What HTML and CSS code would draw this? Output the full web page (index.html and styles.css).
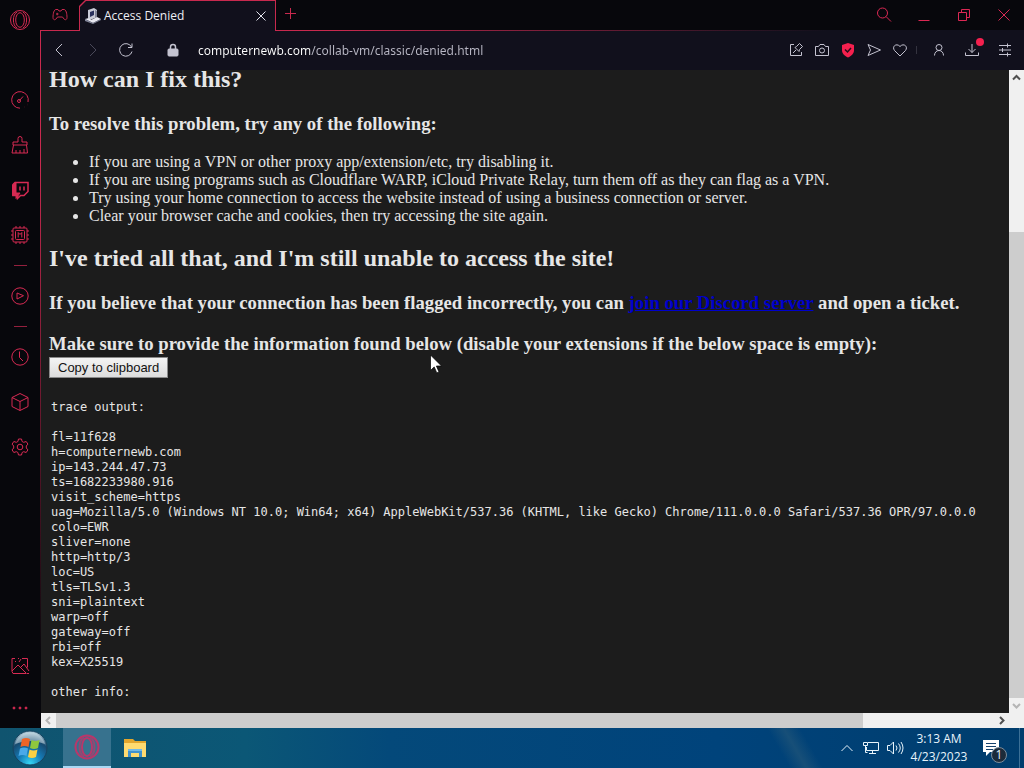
FILE: index.html
```html
<!DOCTYPE html>
<html lang="en">
<head>
<meta charset="utf-8">
<title>Access Denied</title>
<link rel="stylesheet" href="styles.css">
</head>
<body>
<div class="browser">
  <nav class="sidebar" aria-label="Sidebar">
    <button class="side-logo" aria-label="Opera menu"><svg width="22" height="22" viewBox="0 0 22 22"><circle cx="11" cy="11" r="9.5"/><ellipse cx="11" cy="11" rx="4.3" ry="7.3"/><path d="M8 3.2C3.2 5 3.200 17 8 18.800M14 3.200c4.800 1.800 4.800 13.800 0 15.600"/></svg></button>
    <div class="side-group">
      <button aria-label="GX Control"><svg width="20" height="20" viewBox="0 0 20 20"><path d="M10 18.200a8.300 8.300 0 1 1 8-6.200M9.500 10.500l3.500-4"/><circle cx="9" cy="11" r="1.500"/><path d="M17.500 14.500h.1M14.500 17h.1" stroke-width="1.800"/></svg></button>
      <button aria-label="GX Cleaner"><svg width="20" height="20" viewBox="0 0 20 20"><path d="M3 10V7h5V3.500a2 2 0 0 1 4 0V7h5v3zM3.500 10L2 18h15.500L16.500 10M6 18v-3M10 18v-3M14 18v-4"/></svg></button>
      <button aria-label="Twitch"><svg width="20" height="20" viewBox="0 0 20 20"><path class="solid" d="M2.500 5L6 2v11h4l-4 5.500v-3H2.500z"/><path d="M5 2.500h13v9l-4 4h-3.500l-3 3v-3H3V4.500zM10 6.500v4M14 6.500v4" stroke-width="1.500"/></svg></button>
      <button aria-label="Limiter"><svg width="20" height="20" viewBox="0 0 20 20"><rect x="3" y="3" width="14" height="14" rx="1"/><rect x="5.500" y="5.500" width="9" height="9" rx="1"/><path d="M8.200 12.500v-5l1.800 2 1.800-2v5M6 3V1M10 3V1M14 3V1M6 19v-2M10 19v-2M14 19v-2M1 6h2M1 10h2M1 14h2M17 6h2M17 10h2M17 14h2"/></svg></button>
    </div>
    <hr>
    <div class="side-group">
      <button aria-label="Player"><svg width="20" height="20" viewBox="0 0 20 20"><circle cx="10" cy="10" r="8.200"/><path d="M7 7l6.500 2.700L7 13z"/></svg></button>
    </div>
    <hr>
    <div class="side-group">
      <button aria-label="History"><svg width="20" height="20" viewBox="0 0 20 20"><circle cx="10" cy="10" r="8.200"/><path d="M9.500 4.500v6l3.500 3.500"/></svg></button>
      <button aria-label="Extensions"><svg width="20" height="20" viewBox="0 0 20 20"><path d="M10 1.500l8 4v9l-8 4-8-4v-9zM2 5.500l8 4 8-4M10 9.500v9"/></svg></button>
      <button aria-label="Settings"><svg width="20" height="20" viewBox="0 0 20 20"><circle cx="10" cy="10" r="2.800"/><path d="M8.500 2h3l.6 2.500 1.600.8 2.500-.8 1.700 2.600-1.600 1.900v2l1.600 1.900-1.700 2.600-2.500-.8-1.600.8-.6 2.500h-3l-.6-2.500-1.600-.8-2.500.8-1.700-2.600L3.700 11V9L2.100 7.100l1.700-2.600 2.500.8 1.600-.8z"/></svg></button>
    </div>
    <div class="side-bottom">
      <button aria-label="Wallpaper"><svg width="20" height="20" viewBox="0 0 20 20"><path d="M5 2.500H2v13l1 2h13M8 2.500h1M12 2.500h5.500v9M2 15l6-6 8.500 8.500M11 11l3-3 5 7M5 5.500h1M9 6l2-3M19 17.500h-2"/></svg></button>
      <button aria-label="More"><svg width="20" height="20" viewBox="0 0 20 20"><g class="solid"><circle cx="4" cy="10" r="1"/><circle cx="10" cy="10" r="1"/><circle cx="16" cy="10" r="1"/></g></svg></button>
    </div>
  </nav>

  <main class="window">
    <header class="tabbar">
      <button class="gx" aria-label="GX Corner"><svg width="16" height="14" viewBox="0 0 16 14"><path d="M4 1.500h2l1 1.500h2l1-1.500h2c2 0 3 4 3 8 0 2-1.500 3-3 1.500l-1.500-2h-5L4 11C2.500 12.500 1 11.500 1 9.500c0-4 1-8 3-8zM4 6h2.500M5.200 4.800v2.500M10.500 5h.1M12 7h.1"/></svg></button>
      <div class="tab">
        <svg class="favicon" width="16" height="16" viewBox="0 0 16 16"><path fill="#c9cad6" d="M3 2l6-2 3 2v7l-7 3-2-2z"/><path fill="#29305c" d="M5 4l4-1.500V7L5 9z"/><path fill="#83869a" d="M10 2l2 1v6l-2 1z"/><path fill="#e8e8f0" d="M0 11l4-1 2 2 6-3 4 2-8 4z"/><path fill="#83869a" d="M0 11v2l8 3 8-4v-1l-8 4z"/></svg>
        <span class="tab-title">Access Denied</span>
        <button class="tab-close" aria-label="Close tab"><svg width="12" height="12" viewBox="0 0 12 12"><path d="M1.500 1.500l9 9M10.500 1.500l-9 9"/></svg></button>
      </div>
      <button class="new-tab" aria-label="New tab"><svg width="12" height="12" viewBox="0 0 12 12"><path d="M5.500 0v11M0 5.500h11"/></svg></button>
      <div class="window-controls">
        <button aria-label="Search tabs"><svg width="16" height="16" viewBox="0 0 16 16"><circle cx="6.500" cy="6" r="5"/><path d="M10 9.500l5 5"/></svg></button>
        <button aria-label="Minimize"><svg width="16" height="16" viewBox="0 0 16 16"><path d="M2.500 13.500h11"/></svg></button>
        <button aria-label="Restore"><svg width="16" height="16" viewBox="0 0 16 16"><path d="M2.500 5.500h8v8h-8zM5.500 5.500v-3h8v8h-3"/></svg></button>
        <button aria-label="Close"><svg width="16" height="16" viewBox="0 0 16 16"><path d="M2.500 2.500l11 11M13.500 2.500l-11 11"/></svg></button>
      </div>
    </header>

    <section class="frame">
      <div class="toolbar">
        <div class="nav-buttons">
          <button aria-label="Back"><svg width="16" height="16" viewBox="0 0 16 16"><path d="M10 2L4 8l6 6"/></svg></button>
          <button class="dim" aria-label="Forward" disabled><svg width="16" height="16" viewBox="0 0 16 16"><path d="M5 2l6 6-6 6"/></svg></button>
          <button aria-label="Reload"><svg width="16" height="16" viewBox="0 0 16 16"><path d="M13.500 5A6.300 6.300 0 1 0 14 9.500M14 1.500V5.500h-4"/></svg></button>
        </div>
        <button class="lock" aria-label="Site information"><svg width="12" height="14" viewBox="0 0 12 14"><rect class="lock-body" x="1" y="6" width="10" height="7" rx="1"/><path d="M3.500 6V4a2.500 2.500 0 0 1 5 0v2" stroke-width="1.500"/></svg></button>
        <input class="address" type="text" aria-label="Address" value="computernewb.com/collab-vm/classic/denied.html">
        <div class="tools">
          <button aria-label="Easy setup"><svg width="16" height="16" viewBox="0 0 16 16"><path d="M6 2.500H2.500v11h11V10M5 11l3-3M7 5.500l4 4 .5-2 3-3-3-3-3 3z"/></svg></button>
          <button aria-label="Snapshot"><svg width="16" height="16" viewBox="0 0 16 16"><path d="M1.500 4.500h3l1.500-2h4l1.500 2h3v9h-13z"/><circle cx="8" cy="8.500" r="2.500"/></svg></button>
          <button aria-label="Ad blocker"><svg width="16" height="16" viewBox="0 0 16 16"><path class="shield" d="M8 1l6 2v5c0 4-3 6-6 7.500C5 14 2 12 2 8V3z"/><path class="tick" d="M5 7.500l2.500 2.500L11 6"/></svg></button>
          <button aria-label="Send to My Flow"><svg width="16" height="16" viewBox="0 0 16 16"><path d="M2 2.500L14.500 8 2 13.500 4.500 8z"/></svg></button>
          <button aria-label="Favourite"><svg width="16" height="16" viewBox="0 0 16 16"><path d="M8 14L2.500 8.500C-.5 4.500 4.500.5 8 4.500c3.500-4 8.500 0 5.500 4z"/></svg></button>
        </div>
        <div class="tools-right">
          <button aria-label="Profile"><svg width="16" height="16" viewBox="0 0 16 16"><circle cx="8" cy="5.500" r="3"/><path d="M3.500 13.500c0-3 2-5 4.500-5s4.500 2 4.500 5"/></svg></button>
          <button class="download" aria-label="Downloads"><svg width="16" height="16" viewBox="0 0 16 16"><path d="M8 2v8.500M4.500 7L8 10.500 11.500 7M1.500 10.500v3h13v-3"/></svg><span class="dot"></span></button>
          <button aria-label="Easy setup menu"><svg width="16" height="16" viewBox="0 0 16 16"><path d="M2 3.500h12M2 8h12M2 12.500h12M10.500 1.500v4M5.500 6v4M10.500 10.500v4"/></svg></button>
        </div>
      </div>

      <div class="viewport">
        <article class="page">
          <h2>How can I fix this?</h2>
          <h3>To resolve this problem, try any of the following:</h3>
          <ul>
            <li>If you are using a VPN or other proxy app/extension/etc, try disabling it.</li>
            <li>If you are using programs such as Cloudflare WARP, iCloud Private Relay, turn them off as they can flag as a VPN.</li>
            <li>Try using your home connection to access the website instead of using a business connection or server.</li>
            <li>Clear your browser cache and cookies, then try accessing the site again.</li>
          </ul>
          <h2>I've tried all that, and I'm still unable to access the site!</h2>
          <h3>If you believe that your connection has been flagged incorrectly, you can <a href="#discord">join our Discord server</a> and open a ticket.</h3>
          <h3 class="info">Make sure to provide the information found below (disable your extensions if the below space is empty):</h3>
          <button class="copy">Copy to clipboard</button>
<pre>trace output:

fl=11f628
h=computernewb.com
ip=143.244.47.73
ts=1682233980.916
visit_scheme=https
uag=Mozilla/5.0 (Windows NT 10.0; Win64; x64) AppleWebKit/537.36 (KHTML, like Gecko) Chrome/111.0.0.0 Safari/537.36 OPR/97.0.0.0
colo=EWR
sliver=none
http=http/3
loc=US
tls=TLSv1.3
sni=plaintext
warp=off
gateway=off
rbi=off
kex=X25519

other info:</pre>
        </article>
        <div class="vscroll">
          <svg width="15" height="15" viewBox="0 0 15 15"><path d="M4 9.500L7.500 6 11 9.500"/></svg>
          <div class="vtrack"><div class="vthumb"></div></div>
          <svg class="faded" width="15" height="15" viewBox="0 0 15 15"><path d="M4 6l3.500 3.500L11 6"/></svg>
        </div>
        <div class="hscroll">
          <svg class="faded" width="15" height="15" viewBox="0 0 15 15"><path d="M9 4L5.500 7.500 9 11"/></svg>
          <div class="htrack"><div class="hthumb"></div></div>
          <svg width="15" height="15" viewBox="0 0 15 15"><path d="M6 4l3.500 3.500L6 11"/></svg>
        </div>
      </div>
    </section>
  </main>
</div>

<footer class="taskbar">
  <button class="start" aria-label="Start"><svg width="36" height="36" viewBox="0 0 36 36">
    <defs><radialGradient id="orb" cx=".5" cy=".95" r=".9"><stop offset="0" stop-color="#35d6f5"/><stop offset=".4" stop-color="#1579b4"/><stop offset=".75" stop-color="#174b70"/><stop offset="1" stop-color="#a9c6d4"/></radialGradient></defs>
    <circle cx="18" cy="18" r="17" fill="url(#orb)" stroke="#17435f"/><path d="M3 14a15.500 15.500 0 0 1 30 0q-15-6-30 0z" fill="#d5e4ea" opacity=".5"/>
    <path d="M10 9q4-2 8 0l-1.500 8q-4-2-8 0z" fill="#ee6428"/><path d="M19.500 10q4 2 8 0L26 18q-4 2-8 0z" fill="#8fc73e"/><path d="M8 18.500q4-2 8 0L14.500 26q-4-2-8 0z" fill="#4aa9e8"/><path d="M17.500 19.500q4 2 8 0L24 27q-4 2-8 0z" fill="#fbd043"/></svg></button>
  <button class="task active" aria-label="Opera GX"><svg width="26" height="26" viewBox="0 0 26 26"><circle cx="13" cy="13" r="11.500"/><ellipse cx="13" cy="13" rx="5" ry="9"/><path d="M10 3.500c-6 3-6 16 0 19M16 3.500c6 3 6 16 0 19" opacity=".7"/></svg></button>
  <button class="task" aria-label="File Explorer"><svg class="folder" width="24" height="20" viewBox="0 0 24 20"><path fill="#e3a72e" d="M1 1h9l2 2h11v4H1z"/><path fill="#ffdb70" d="M1 5h22v14H1z"/><path fill="#3f91ce" d="M5 11h14v8h-3v-4H8v4H5z"/><path fill="#72b9e6" d="M5 11h14v2H5z"/></svg></button>
  <div class="tray">
    <button aria-label="Show hidden icons"><svg width="16" height="16" viewBox="0 0 16 16"><path d="M2.500 11L8 5.500l5.500 5.500"/></svg></button>
    <button aria-label="Network"><svg width="18" height="16" viewBox="0 0 18 16"><path d="M6 2.500h10.500v8H4.500V7M10.500 10.500v3M7 13.500h7M1.500 2.500h4v3h-4zM3.500 5.500v7h2"/></svg></button>
    <button aria-label="Volume"><svg width="18" height="16" viewBox="0 0 18 16"><path d="M1.500 5.500H4L7.500 2v12L4 10.500H1.500zM10 5.500q2 2.500 0 5M12.500 3.500q3.500 4.500 0 9M15 2q4 6 0 12"/></svg></button>
    <button class="clock"><time>3:13 AM</time><time>4/23/2023</time></button>
    <button class="notes" aria-label="Notifications"><svg width="18" height="18" viewBox="0 0 18 18"><path fill="#fff" stroke="none" d="M1 1h16v12H8l-4 4v-4H1z"/><path stroke="#17436e" d="M4 4.500h10M4 7.500h10M4 10.500h7"/></svg><span class="count">1</span></button>
  </div>
</footer>
<svg class="cursor" width="12" height="20" viewBox="0 0 12 20" aria-hidden="true"><path d="M.5 1v15.500l3.700-3.600 2.600 6 2.200-1-2.600-5.900h5.100z" fill="#fff" stroke="#000" stroke-width=".7"/></svg>
</body>
</html>
```

FILE: styles.css
```css
* { box-sizing: border-box; }

:root {
  --accent: #c8294e;
  --hot: #f5204e;
  --ui: "Open Sans", "Noto Sans", sans-serif;
}

body {
  margin: 0;
  height: 100vh;
  display: flex;
  flex-direction: column;
  overflow: hidden;
  background: #07070c;
  font-family: var(--ui);
}

button {
  border: 0;
  padding: 0;
  background: none;
  display: flex;
  align-items: center;
  justify-content: center;
  color: inherit;
  font-family: inherit;
}

svg {
  display: block;
  flex: none;
  fill: none;
  stroke: currentColor;
  stroke-width: 1;
}

.browser { flex: 1; min-height: 0; display: flex; }

/* Sidebar */
.sidebar {
  width: 40px;
  flex: none;
  display: flex;
  flex-direction: column;
  color: #d72a53;
}
.side-logo { height: 40px; margin-bottom: 37px; }
.side-group { display: grid; grid-auto-rows: 45px; }
.sidebar hr {
  width: 13px;
  margin: 8px auto 7px;
  border: 0;
  border-top: 1px solid #94203e;
}
.solid { fill: currentColor; }
.side-bottom {
  margin-top: auto;
  display: grid;
  grid-auto-rows: 40px;
  gap: 2px;
}

/* Tabs */
.window { flex: 1; min-width: 0; display: flex; flex-direction: column; }
.tabbar { height: 31px; margin-bottom: -1px; display: flex; color: var(--accent); }
.gx { width: 39px; height: 30px; }
.tab {
  position: relative;
  z-index: 1;
  width: 197px;
  padding: 0 8px 0 6px;
  display: flex;
  align-items: center;
  gap: 3px;
  color: #eeeef4;
  background: var(--accent);
  clip-path: polygon(0 6px, 6px 0, 100% 0, 100% 100%, 0 100%);
}
.tab::before {
  content: "";
  position: absolute;
  inset: 1px 1px 0;
  background: #11101c;
  clip-path: polygon(0 6px, 6px 0, 100% 0, 100% 100%, 0 100%);
}
.tab > * { position: relative; }
.favicon { stroke: none; }
.tab-title { flex: 1; font-size: 12px; line-height: 16px; }
.tab-close { width: 14px; height: 14px; color: #e4e4ee; }
.new-tab { width: 30px; height: 28px; }
.window-controls { margin-left: auto; display: flex; }
.window-controls button { width: 40px; height: 30px; color: #dc2854; }

/* Accent hairline along the top and left edges, fading away from the corner */
.frame {
  flex: 1;
  min-height: 0;
  padding: 1px 0 0 1px;
  display: flex;
  flex-direction: column;
  background:
    linear-gradient(90deg, var(--accent) 30%, #11101c 80%) top / 100% 1px no-repeat,
    linear-gradient(var(--accent) 20%, #07070c 90%) left / 1px 100% no-repeat;
}

/* Toolbar */
.toolbar {
  height: 39px;
  flex: none;
  padding: 0 8px 1px 0;
  display: flex;
  align-items: center;
  background: #11101c;
  color: #c4c3d0;
}
.nav-buttons { padding-left: 2px; display: flex; }
.nav-buttons button { width: 33px; height: 32px; }
.nav-buttons .dim { color: #4a4959; }
.lock { width: 12px; height: 24px; margin: 0 19px 0 25px; }
.lock-body { fill: currentColor; }
.address {
  flex: 1;
  min-width: 0;
  height: 28px;
  padding: 0;
  border: 0;
  outline: 0;
  font: 12px/20px "Noto Sans", sans-serif;
  color: #d8d8e2;
  background: linear-gradient(90deg, #fff 112px, #b9b8c5 112px);
  -webkit-background-clip: text;
  background-clip: text;
  -webkit-text-fill-color: transparent;
}
.tools { display: flex; }
.tools button { width: 26px; height: 28px; }
.shield { fill: var(--hot); stroke: none; }
.tick { stroke: #2a0c18; stroke-width: 1.5; }
.tools-right {
  margin-left: 3px;
  padding-left: 6px;
  display: flex;
  background: linear-gradient(#34333f, #34333f) left / 1px 8px no-repeat;
}
.tools-right button { width: 33px; height: 28px; }
.tools-right button:last-child { margin-right: -5px; }
.tools-right .download { position: relative; }
.dot {
  position: absolute;
  top: 2px;
  right: 4px;
  width: 8px;
  height: 8px;
  border-radius: 50%;
  background: var(--hot);
}

/* Page area */
.viewport {
  flex: 1;
  min-height: 0;
  display: grid;
  grid-template: minmax(0, 1fr) 15px / minmax(0, 1fr) 15px;
  background: #f0f0f0;
}
.page {
  overflow: hidden;
  padding: 0 8px;
  background: #1c1c1c;
  color: #e6e6e6;
  font-family: "Liberation Serif", serif;
  font-size: 16px;
  line-height: 18px;
}
.page h2 { margin: 20px 0; font-size: 24px; line-height: 27px; }
.page h2:first-child { margin: 0 0 24px; line-height: 19px; }
.page h3 { margin: 20px 0 19px; line-height: 21px; }
.page h3.info { margin-bottom: 3px; }
.page ul { margin: 19px 0 20px; padding-left: 40px; }
.page a { color: #0000cc; }
.copy {
  height: 21px;
  padding: 0 8px;
  border: 1px solid #8a8a8a;
  background: linear-gradient(#f4f4f4, #dcdcdc);
  color: #111;
  font: 13px/15px "Liberation Sans", sans-serif;
}
.page pre {
  margin: 22px 2px 0;
  font: 12px/15px "DejaVu Sans Mono", monospace;
}

.vscroll, .hscroll { display: flex; color: #505050; }
.vscroll { flex-direction: column; }
.vscroll svg, .hscroll svg { stroke-width: 2; }
.hscroll { grid-column: 1; }
.vscroll .faded, .hscroll .faded { color: #b5b5b5; }
.vtrack, .htrack { flex: 1; display: flex; }
.vtrack { align-items: flex-end; }
.vthumb { width: 100%; height: 76%; background: #cdcdcd; }
.hthumb { width: 86%; background: #cdcdcd; }

/* Taskbar */
.taskbar {
  height: 40px;
  flex: none;
  display: flex;
  color: #e8f4fb;
  background:
    linear-gradient(60deg, transparent 30%, #174f78 50%, transparent 70%) 765px 0 / 60px 40px no-repeat,
    linear-gradient(90deg, #10546f, #0b5776 24%, #04497a 38%, #00437b 70%, #003d6d);
}
.start { width: 60px; margin-right: 3px; }
.start svg { stroke: none; }
.task { width: 48px; }
.task.active {
  background: #37728e;
  border-bottom: 2px solid #a9d8f4;
  color: #b8376a;
}
.task.active svg { stroke-width: 2; }
.task .folder { stroke: none; }
.tray { margin-left: auto; display: flex; border-right: 1px solid #3c7096; margin-right: 4px; }
.tray > button { width: 24px; }
.tray .clock {
  width: 64px;
  flex-direction: column;
  font-size: 12px;
  line-height: 18px;
  white-space: nowrap;
}
.tray .notes { position: relative; width: 48px; padding-right: 8px; }
.count {
  position: absolute;
  right: 12px;
  bottom: 5px;
  width: 16px;
  height: 16px;
  border: 1px solid #7c8d9c;
  border-radius: 50%;
  background: #1c2b3a;
  font-size: 12px;
  line-height: 14px;
  text-align: center;
}

.cursor { position: absolute; left: 430px; top: 354px; }
```
